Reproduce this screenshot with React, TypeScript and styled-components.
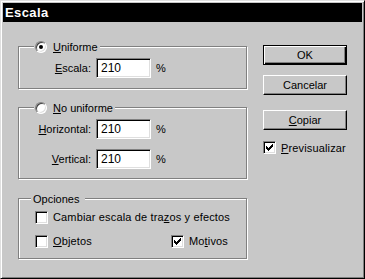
import styled, { createGlobalStyle } from 'styled-components';

const face = '#c8c8c8';

const GlobalStyle = createGlobalStyle`
    html, body {
        margin: 0;
        padding: 0;
        background: ${face};
    }

    body {
        font-family: "Liberation Sans", Arial, sans-serif;
        font-size: 11px;
        color: #000;
    }
`;

const Window = styled.div`
    box-sizing: border-box;
    width: 365px;
    height: 279px;
    padding: 2px;
    background: ${face};
    border: 1px solid;
    border-color: #dfdfdf #000 #000 #dfdfdf;
    box-shadow: inset 1px 1px 0 #fff, inset -1px -1px 0 #808080;
    display: flex;
    flex-direction: column;
`;

const TitleBar = styled.div`
    height: 19px;
    background: #000;
    color: #fff;
    font-weight: bold;
    font-size: 13px;
    letter-spacing: 0.4px;
    padding-left: 2px;
    display: flex;
    align-items: center;
`;

const Body = styled.div`
    display: flex;
    align-items: flex-start;
    gap: 16px;
    padding: 23px 0 0 15px;
`;

const LeftColumn = styled.div`
    display: flex;
    flex-direction: column;
    padding-top: 1px;
`;

const Group = styled.div<{ $pad: string; $top?: number }>`
    position: relative;
    box-sizing: border-box;
    width: 229px;
    margin-top: ${(p) => p.$top ?? 0}px;
    padding: ${(p) => p.$pad};
    border: 1px solid #808080;
    box-shadow: 1px 1px 0 #fff, inset 1px 1px 0 #fff;
`;

const Legend = styled.div<{ $left: number; $pad: string }>`
    position: absolute;
    top: -7px;
    left: ${(p) => p.$left}px;
    height: 13px;
    padding: ${(p) => p.$pad};
    background: ${face};
    display: flex;
    align-items: center;
    gap: 6px;
    white-space: nowrap;
`;

const Radio = styled.span<{ $checked?: boolean }>`
    position: relative;
    box-sizing: border-box;
    width: 12px;
    height: 12px;
    border-radius: 50%;
    border: 1px solid;
    border-color: #808080 #fff #fff #808080;
    background: #fff;
    box-shadow: inset 1px 1px 0 #404040, inset -1px -1px 0 #dfdfdf;

    &::after {
        content: '';
        display: ${(p) => (p.$checked ? 'block' : 'none')};
        position: absolute;
        left: 3px;
        top: 3px;
        width: 4px;
        height: 4px;
        border-radius: 50%;
        background: #000;
    }
`;

const FieldGrid = styled.div`
    display: grid;
    grid-template-columns: 72px 55px auto;
    column-gap: 5px;
    row-gap: 10px;
    align-items: center;
`;

const FieldLabel = styled.span`
    justify-self: end;
    white-space: nowrap;
`;

const NumberInput = styled.input`
    box-sizing: border-box;
    width: 55px;
    height: 20px;
    padding: 0 0 0 4px;
    margin: 0;
    font-family: "Liberation Sans", Arial, sans-serif;
    font-size: 12px;
    color: #000;
    background: #fff;
    border: 1px solid;
    border-color: #808080 #fff #fff #808080;
    box-shadow: inset 1px 1px 0 #000, inset -1px -1px 0 #dfdfdf;
    outline: none;
`;

const CheckGrid = styled.div`
    display: grid;
    grid-template-columns: 136px auto;
    grid-auto-rows: 20px;
    row-gap: 4px;
    align-items: center;
`;

const CheckRow = styled.label<{ $span?: boolean }>`
    display: flex;
    align-items: center;
    gap: 5px;
    white-space: nowrap;
    letter-spacing: 0.15px;
    grid-column: ${(p) => (p.$span ? '1 / span 2' : 'auto')};
`;

const CheckBox = styled.span`
    position: relative;
    box-sizing: border-box;
    flex: none;
    width: 13px;
    height: 13px;
    background: #fff;
    border: 1px solid;
    border-color: #808080 #fff #fff #808080;
    box-shadow: inset 1px 1px 0 #000, inset -1px -1px 0 #dfdfdf;

    svg {
        position: absolute;
        left: 2px;
        top: 2px;
    }
`;

const U = styled.span`
    text-decoration: underline;
`;

const RightColumn = styled.div`
    width: 84px;
    display: flex;
    flex-direction: column;
`;

const Button = styled.button<{ $default?: boolean; $top?: number }>`
    box-sizing: border-box;
    width: 84px;
    height: 20px;
    margin: ${(p) => p.$top ?? 0}px 0 0;
    padding: 0;
    font-family: "Liberation Sans", Arial, sans-serif;
    font-size: 11px;
    color: #000;
    background: ${face};
    border: 1px solid;
    border-color: ${(p) => (p.$default ? '#000' : '#fff #000 #000 #fff')};
    box-shadow: ${(p) =>
        p.$default
            ? 'inset 1px 1px 0 #fff, inset -1px -1px 0 #000, inset -2px -2px 0 #808080'
            : 'inset -1px -1px 0 #808080'};
    outline: none;
`;

const PreviewRow = styled(CheckRow)`
    margin-top: 11px;
    height: 13px;
`;

function Check({ checked }: { checked?: boolean }) {
    return (
        <CheckBox>
            {checked && (
                <svg width="7" height="7" viewBox="0 0 7 7" shapeRendering="crispEdges" style={{ left: 2, top: 2 }}>
                    <path
                        fill="#000"
                        d="M6 0h1v1h-1z M5 1h2v1h-2z M0 2h1v1h-1z M4 2h3v1h-3z M0 3h2v1h-2z M3 3h3v1h-3z M0 4h5v1h-5z M1 5h3v1h-3z M2 6h1v1h-1z"
                    />
                </svg>
            )}
        </CheckBox>
    );
}

export default function App() {
    return (
        <>
            <GlobalStyle />
            <Window>
                <TitleBar>Escala</TitleBar>
                <Body>
                    <LeftColumn>
                        <Group $pad="11px 0 10px">
                            <Legend $left={15} $pad="0 2px 0 1px">
                                <Radio $checked />
                                <span><U>U</U>niforme</span>
                            </Legend>
                            <FieldGrid>
                                <FieldLabel><U>E</U>scala:</FieldLabel>
                                <NumberInput defaultValue="210" readOnly />
                                <span>%</span>
                            </FieldGrid>
                        </Group>

                        <Group $pad="11px 0 9px" $top={18}>
                            <Legend $left={15} $pad="0 2px 0 1px">
                                <Radio />
                                <span><U>N</U>o uniforme</span>
                            </Legend>
                            <FieldGrid>
                                <FieldLabel><U>H</U>orizontal:</FieldLabel>
                                <NumberInput defaultValue="210" readOnly />
                                <span>%</span>
                                <FieldLabel><U>V</U>ertical:</FieldLabel>
                                <NumberInput defaultValue="210" readOnly />
                                <span>%</span>
                            </FieldGrid>
                        </Group>

                        <Group $pad="8px 0 7px 16px" $top={19}>
                            <Legend $left={12} $pad="0 6px 0 2px">
                                <span>Opciones</span>
                            </Legend>
                            <CheckGrid>
                                <CheckRow $span>
                                    <Check />
                                    <span>Cambiar escala de tra<U>z</U>os y efectos</span>
                                </CheckRow>
                                <CheckRow>
                                    <Check />
                                    <span><U>O</U>bjetos</span>
                                </CheckRow>
                                <CheckRow>
                                    <Check checked />
                                    <span>Mo<U>t</U>ivos</span>
                                </CheckRow>
                            </CheckGrid>
                        </Group>
                    </LeftColumn>

                    <RightColumn>
                        <Button $default>OK</Button>
                        <Button $top={10}>Cancelar</Button>
                        <Button $top={15}><U>C</U>opiar</Button>
                        <PreviewRow>
                            <Check checked />
                            <span><U>P</U>revisualizar</span>
                        </PreviewRow>
                    </RightColumn>
                </Body>
            </Window>
        </>
    );
}
